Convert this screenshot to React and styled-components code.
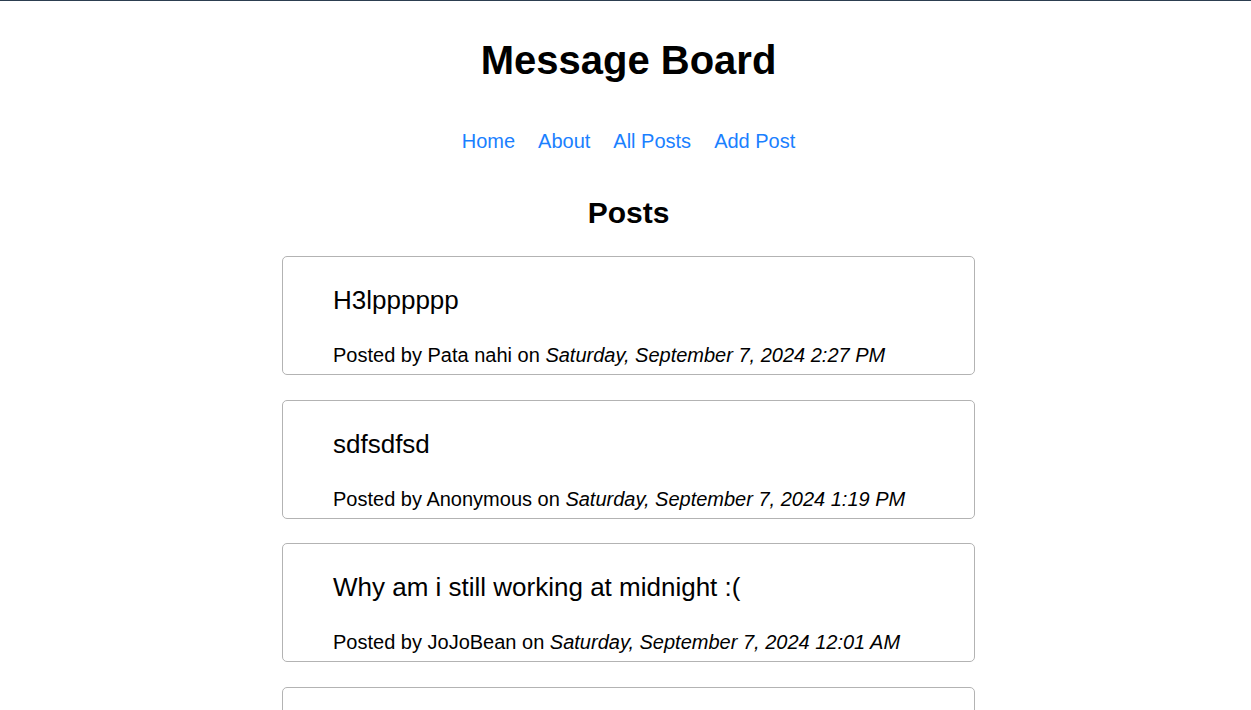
import React from "react";
import styled, { createGlobalStyle } from "styled-components";

const GlobalStyle = createGlobalStyle`
  html, body {
    margin: 0;
    padding: 0;
    background: #fff;
  }
  body {
    font-family: "Liberation Sans", Arial, sans-serif;
    color: #000;
    border-top: 1px solid #2c3e50;
  }
`;

const Page = styled.div`
  display: flex;
  flex-direction: column;
  align-items: center;
  padding-left: 6px;
`;

const Title = styled.h1`
  font-size: 40px;
  font-weight: bold;
  margin: 36px 0 0;
  line-height: 46px;
`;

const Nav = styled.nav`
  display: flex;
  gap: 23px;
  margin-top: 47px;
  line-height: 23px;
`;

const NavLink = styled.a`
  font-size: 20px;
  color: #1a80ff;
  text-decoration: none;
  cursor: pointer;
`;

const Heading = styled.h2`
  font-size: 30px;
  font-weight: bold;
  margin: 43px 0 0;
  line-height: 34px;
`;

const List = styled.div`
  display: flex;
  flex-direction: column;
  gap: 24.5px;
  margin-top: 26px;
`;

const Card = styled.div`
  box-sizing: border-box;
  width: 693px;
  height: 119px;
  border: 1px solid #b3b3b3;
  border-radius: 5px;
  padding: 28px 20px 0 50px;
`;

const PostTitle = styled.h3`
  font-size: 26px;
  font-weight: normal;
  margin: 0;
  line-height: 30px;
`;

const Meta = styled.p`
  font-size: 20px;
  margin: 29px 0 0;
  line-height: 23px;
  em {
    font-style: italic;
  }
`;

const posts = [
  { title: "H3lpppppp", author: "Pata nahi", date: "Saturday, September 7, 2024 2:27 PM" },
  { title: "sdfsdfsd", author: "Anonymous", date: "Saturday, September 7, 2024 1:19 PM" },
  { title: "Why am i still working at midnight :(", author: "JoJoBean", date: "Saturday, September 7, 2024 12:01 AM" },
  { title: "Hello", author: "Anonymous", date: "Friday, September 6, 2024 11:40 PM" },
];

const App = () => {
  return (
    <>
      <GlobalStyle />
      <Page>
        <Title>Message Board</Title>
        <Nav>
          <NavLink>Home</NavLink>
          <NavLink>About</NavLink>
          <NavLink>All Posts</NavLink>
          <NavLink>Add Post</NavLink>
        </Nav>
        <Heading>Posts</Heading>
        <List>
          {posts.map((p, i) => (
            <Card key={i}>
              <PostTitle>{p.title}</PostTitle>
              <Meta>
                Posted by {p.author} on <em>{p.date}</em>
              </Meta>
            </Card>
          ))}
        </List>
      </Page>
    </>
  );
};

export default App;
